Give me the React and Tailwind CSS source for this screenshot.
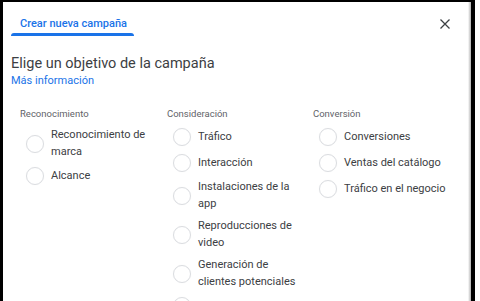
const columns = [
    {
        title: 'Reconocimiento',
        items: ['Reconocimiento de marca', 'Alcance'],
    },
    {
        title: 'Consideración',
        items: [
            'Tráfico',
            'Interacción',
            'Instalaciones de la app',
            'Reproducciones de video',
            'Generación de clientes potenciales',
            'Mensajes',
        ],
    },
    {
        title: 'Conversión',
        items: ['Conversiones', 'Ventas del catálogo', 'Tráfico en el negocio'],
    },
];

const Radio = ({ label }) => (
    <div className="flex items-center gap-[7px] min-h-[20px]">
        <span className="w-[18px] h-[18px] shrink-0 rounded-full border border-[#dadce0] shadow-[0_0_1px_rgba(0,0,0,0.08)]" />
        <span className="w-[104px] text-[11px] leading-[16.5px] text-[#3c4043]">{label}</span>
    </div>
);

const App = () => {
    return (
        <div
            className="w-[480px] h-[301px] bg-white overflow-hidden flex"
            style={{ fontFamily: 'Roboto, "Noto Sans", sans-serif' }}
        >
            <div className="w-[475px] h-[320px] shrink-0 border-l-[3px] border-t-2 border-r-[4px] border-black bg-white flex flex-col pl-2 relative">
                <div className="absolute right-0 top-0 h-full w-[3px] bg-gradient-to-r from-white to-[#b0b0b0]" />
                <div className="flex items-start justify-between pr-[20px]">
                    <div className="flex flex-col w-[123px]">
                        <span className="pt-[15px] pl-[9px] text-[11px] leading-[14px] font-medium text-[#1a73e8]">
                            Crear nueva campaña
                        </span>
                        <span className="mt-[2px] h-[3px] bg-[#1a73e8] rounded-t-sm" />
                    </div>
                    <svg className="mt-[16px]" width="12" height="12" viewBox="0 0 12 12">
                        <path d="M1.5 1.5 L10.5 10.5 M10.5 1.5 L1.5 10.5" stroke="#3c4043" strokeWidth="1.3" fill="none" />
                    </svg>
                </div>

                <h1 className="mt-[18px] text-[14.5px] leading-[20px] text-[#3c4043]">
                    Elige un objetivo de la campaña
                </h1>
                <a className="text-[11px] leading-[14px] text-[#1a73e8]">Más información</a>

                <div className="mt-[19px] pl-[9px] grid grid-cols-[147px_146px_1fr]">
                    {columns.map((col) => (
                        <div key={col.title} className="flex flex-col">
                            <span className="text-[9.5px] leading-[14px] text-[#5f6368]">{col.title}</span>
                            <div className="mt-[6px] pl-[6px] flex flex-col gap-[6px]">
                                {col.items.map((item) => (
                                    <Radio key={item} label={item} />
                                ))}
                            </div>
                        </div>
                    ))}
                </div>
            </div>
        </div>
    );
};

export default App;
